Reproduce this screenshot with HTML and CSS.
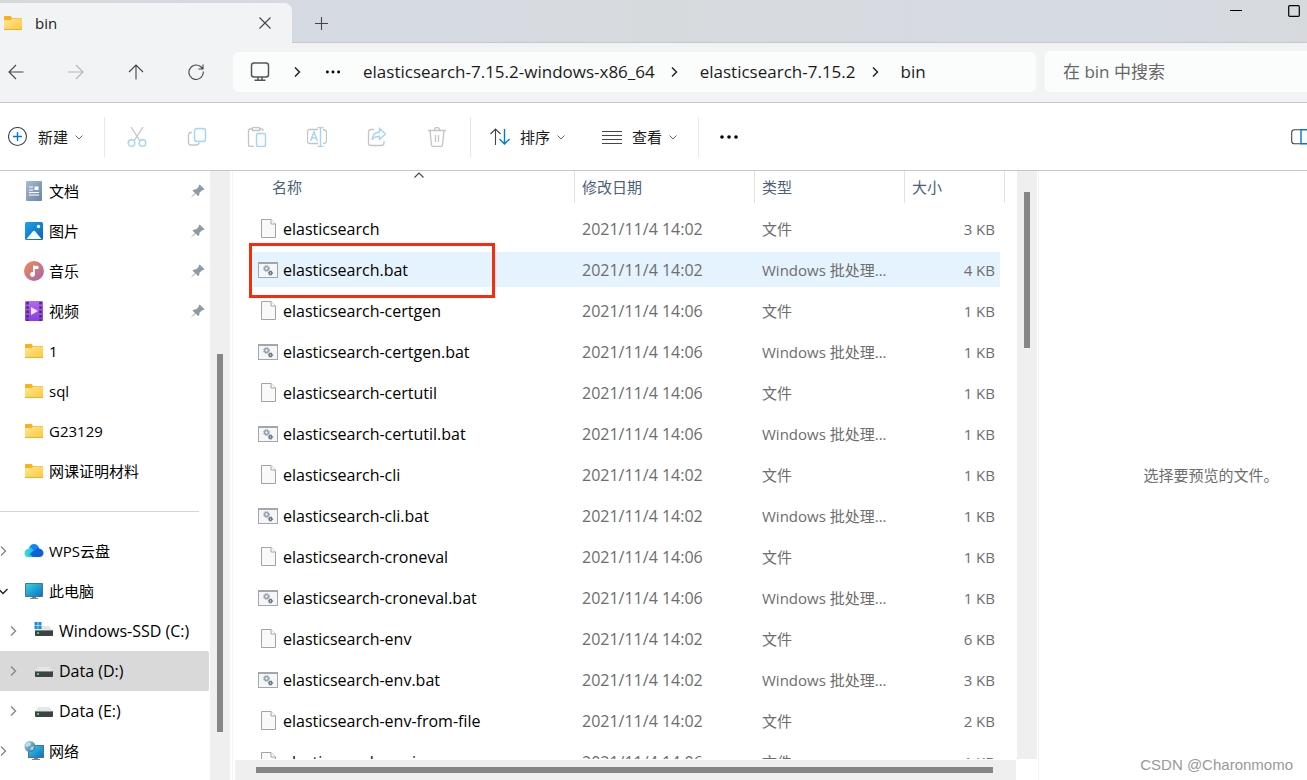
FILE: index.html
```html
<!DOCTYPE html>
<html lang="zh-CN">
<head>
<meta charset="utf-8">
<title>bin</title>
<link rel="stylesheet" href="styles.css">
</head>
<body>
<svg class="defs" aria-hidden="true">
  <defs>
    <linearGradient id="gFolder" x1="0" y1="0" x2="1" y2="1"><stop offset="0" stop-color="#ffe69c"/><stop offset="1" stop-color="#ffc938"/></linearGradient>
    <linearGradient id="gDoc" x1="0" y1="0" x2="1" y2="1"><stop offset="0" stop-color="#a9bdd0"/><stop offset="1" stop-color="#6785a5"/></linearGradient>
    <linearGradient id="gPic" x1="0" y1="0" x2="1" y2="1"><stop offset="0" stop-color="#1ba4e6"/><stop offset="1" stop-color="#0b62b8"/></linearGradient>
    <linearGradient id="gMusic" x1="0" y1="0" x2="1" y2="1"><stop offset="0" stop-color="#f58b4c"/><stop offset="1" stop-color="#a462b4"/></linearGradient>
    <linearGradient id="gVideo" x1="0" y1="0" x2="0" y2="1"><stop offset="0" stop-color="#b668ef"/><stop offset="1" stop-color="#8540df"/></linearGradient>
    <linearGradient id="gScreen" x1="0" y1="0" x2="1" y2="1"><stop offset="0" stop-color="#36d3e0"/><stop offset="1" stop-color="#0b71c6"/></linearGradient>
    <linearGradient id="gCloud" x1="0" y1="0" x2="1" y2="0"><stop offset="0" stop-color="#35e2cf"/><stop offset="1" stop-color="#18a5f5"/></linearGradient>
    <linearGradient id="gGlobe" x1="0" y1="0" x2="1" y2="1"><stop offset="0" stop-color="#a8d5ea"/><stop offset="1" stop-color="#286f9f"/></linearGradient>
  </defs>
  <symbol id="folder" viewBox="0 0 20 16"><path d="M1 2Q1 1 2 1H7.5L9 3V6H1Z" fill="#f9b215"/><path d="M1 5H7.5L9.5 3H18Q19 3 19 4V14Q19 15 18 15H2Q1 15 1 14Z" fill="url(#gFolder)"/><path d="M1 14.5H19" stroke="#eeb02c"/><path d="M9 3.5H19" stroke="#f5c553"/></symbol>
  <symbol id="doc" viewBox="0 0 20 20"><rect x="2" width="16" height="20" rx="1" fill="url(#gDoc)"/><path d="M5 6H9M5 9H9M5 11.500H15M5 14H15" stroke="#fff" stroke-width="1.2"/><rect x="10.500" y="5.500" width="4" height="3.500" fill="#fff"/></symbol>
  <symbol id="pic" viewBox="0 0 20 20"><rect x="1" y="1" width="18" height="18" rx="1.500" fill="url(#gPic)"/><path d="M2.500 18L8.500 10.700Q10 9 11.500 10.700L17.500 18Z" fill="#f2f9ff"/><circle cx="14.500" cy="5.500" r="1.700" fill="#fff"/></symbol>
  <symbol id="music" viewBox="0 0 20 20"><circle cx="10" cy="10" r="10" fill="url(#gMusic)"/><path d="M9 4.500L14.500 5V8H10.800V14H9Z" fill="#fff"/><circle cx="8.500" cy="13.500" r="2.400" fill="#fff"/></symbol>
  <symbol id="video" viewBox="0 0 20 20"><rect x="1" width="18" height="20" rx="1" fill="url(#gVideo)"/><path d="M3.500 1V20M16.500 1V20" stroke="#51247e" stroke-width="2.500" stroke-dasharray="2.500 1.800"/><path d="M7 6L14 10L7 14Z" fill="#efe6fb"/></symbol>
  <symbol id="pin" viewBox="0 0 14 14"><path d="M8.700.5L13.500 5.300L12.500 6.200L11.500 6.100L8.500 8.800Q8.700 11 7.300 12.300L4.500 9.500L1 13L.3 13.500L.6 12.700L3.900 9L1.500 6.500Q3 5.100 5.300 5.300L7.900 2.400L7.800 1.300Z" fill="#8f9ba3"/></symbol>
  <symbol id="cloud" viewBox="0 0 20 16"><path d="M4 14C1.500 14 .5 12 .5 10S2 6 4.500 6C5 3 7 1 10 1C12.500 1 15 3 15 5.500L14 14Z" fill="url(#gCloud)"/><path d="M9 14L5.500 11L10.500 7C12 4.500 14 4.500 15.500 5.500C18 6 19.500 8 19.500 10S18 14 15.500 14Z" fill="#0e5fdc"/><path d="M6 4C8 0 13 .5 14.800 5C13 4.800 11 6.500 10 8.500Q8.500 5 6 4Z" fill="#1384f4"/></symbol>
  <symbol id="screen" viewBox="0 0 20 18"><rect x="1" y="1" width="18" height="14" rx=".8" fill="#507286"/><rect x="2" y="2" width="16" height="12" fill="url(#gScreen)"/><path d="M8 15H12V16H14V17H6V16H8Z" fill="#74838d"/></symbol>
  <symbol id="drive" viewBox="0 0 20 18"><path d="M4 5H15L18.500 9H1.500Z" fill="#e4e6e8"/><rect x="1" y="9" width="18" height="6" rx=".7" fill="#3f4244"/><path d="M1.500 9.500H18.500" stroke="#85898c"/><rect x="3" y="11" width="2" height="2" fill="#36db54"/></symbol>
  <symbol id="windrive" viewBox="0 0 20 18"><path d="M5 4H15L18.500 8H1.500Z" fill="#e4e6e8"/><rect x="1" y="8" width="18" height="6" rx=".7" fill="#3f4244"/><path d="M1.500 8.500H18.500" stroke="#85898c"/><rect x="3" y="10" width="2" height="2" fill="#36db54"/><path d="M.5 0H3.700V3.200H.5ZM4.300 0H7.500V3.200H4.300ZM.5 3.800H3.700V7H.5ZM4.300 3.800H7.500V7H4.300Z" fill="#1990dc"/></symbol>
  <symbol id="network" viewBox="0 0 20 20"><rect x="4" y="4" width="16" height="13" fill="#507286"/><rect x="5" y="5" width="14" height="11" fill="url(#gScreen)"/><path d="M10 17H14V18H16V19H8V18H10Z" fill="#74838d"/><circle cx="6" cy="5.500" r="5.500" fill="url(#gGlobe)"/><path d="M3 2L6 1L7 4L4 6L1 5ZM7 6L10 5L9 9L6 9Z" fill="#d7edf4" opacity=".7"/></symbol>
  <symbol id="file" viewBox="0 0 20 20"><path d="M3.500.5H13L17.500 5V18.500H3.500Z" fill="#f9f9f9" stroke="#a3a3a3"/><path d="M13 .5V5H17.500" fill="#fff" stroke="#a3a3a3"/></symbol>
  <symbol id="bat" viewBox="0 0 20 16"><rect x=".5" y=".5" width="19" height="15" fill="#f5f6f7" stroke="#a3a7ab"/><path d="M1 1.500H19" stroke="#a3a7ab"/><g fill="none"><circle cx="8.500" cy="6.500" r="1.900" stroke="#93a3b0" stroke-width="1.500"/><circle cx="8.500" cy="6.500" r="3" stroke="#93a3b0" stroke-dasharray="1.200 1.200"/><circle cx="12.500" cy="11" r="1.400" stroke="#59646c" stroke-width="1.200"/><circle cx="12.500" cy="11" r="2.200" stroke="#59646c" stroke-width=".8" stroke-dasharray="1 1"/></g></symbol>
  <symbol id="right" viewBox="0 0 12 12"><path d="M4 1.500L8.500 6L4 10.500" fill="none" stroke="currentColor" stroke-width="1.400"/></symbol>
  <symbol id="down" viewBox="0 0 8 8"><path d="M.5 2.500L4 6L7.500 2.500" fill="none" stroke="currentColor"/></symbol>
  <symbol id="dots" viewBox="0 0 20 20"><circle cx="3" cy="10" r="1.800"/><circle cx="10" cy="10" r="1.800"/><circle cx="17" cy="10" r="1.800"/></symbol>
</svg>

<header class="tabs">
  <div class="tab">
    <svg class="i-folder"><use href="#folder"/></svg>
    <span class="tab-title">bin</span>
    <button class="tab-close" aria-label="关闭"><svg width="12" height="12"><path d="M.5.5L11.500 11.500M11.500.5L.5 11.500" class="ink"/></svg></button>
  </div>
  <button class="tab-new" aria-label="新标签页"><svg width="13" height="13"><path d="M6.500 0V13M0 6.500H13" class="ink"/></svg></button>
  <div class="window-buttons">
    <button aria-label="最小化"><svg width="12" height="12"><path d="M0 5.500H12" stroke="#000"/></svg></button>
    <button aria-label="最大化"><svg width="12" height="12"><rect x=".7" y=".7" width="10.600" height="10.600" rx="1" fill="none" stroke="#000" stroke-width="1.200"/></svg></button>
  </div>
</header>

<div class="navbar">
  <div class="history">
    <button aria-label="后退"><svg width="16" height="16"><path d="M15.500 8H1M8 1L1 8L8 15" class="ink"/></svg></button>
    <button aria-label="前进" disabled><svg width="16" height="16"><path d="M0 8H15M8 1L15 8L8 15" class="ink pale"/></svg></button>
    <button aria-label="向上"><svg width="16" height="16"><path d="M8 15.500V1M1 8L8 1L15 8" class="ink"/></svg></button>
    <button aria-label="刷新"><svg width="16" height="16"><path d="M15.300 7.500A7.200 7.200 0 1 1 12.500 2.500L15 5M15 .5V5H10.500" class="ink"/></svg></button>
  </div>
  <nav class="address" aria-label="地址">
    <svg width="22" height="22" class="monitor"><rect x="2.500" y="2" width="17" height="14" rx="2.500"/><path d="M9 16V19M13 16V19M5.500 19.300H16.500"/></svg>
    <svg class="chev"><use href="#right"/></svg>
    <svg class="i-more small"><use href="#dots"/></svg>
    <a href="#a">elasticsearch-7.15.2-windows-x86_64</a>
    <svg class="chev"><use href="#right"/></svg>
    <a href="#b">elasticsearch-7.15.2</a>
    <svg class="chev"><use href="#right"/></svg>
    <a href="#c">bin</a>
  </nav>
  <input class="search" type="search" placeholder="在 bin 中搜索" aria-label="搜索">
</div>

<div class="toolbar">
  <div class="group group-new">
    <button class="cmd"><svg width="20" height="20"><circle cx="9.500" cy="9.500" r="9" class="ink"/><path d="M9.500 5V14M5 9.500H14" class="blue"/></svg><span>新建</span><svg class="i-down"><use href="#down"/></svg></button>
  </div>
  <div class="group group-edit">
    <button aria-label="剪切" disabled><svg width="20" height="20"><path d="M4 0L13 14M16 0L7 14" class="gray"/><circle cx="4.500" cy="16" r="3.300" class="sky"/><circle cx="15.500" cy="16" r="3.300" class="sky"/></svg></button>
    <button aria-label="复制" disabled><svg width="20" height="20"><path d="M5 5.500H4Q1.500 5.500 1.500 8V15.500Q1.500 18 4 18H9Q12 18 12 15.500" class="gray"/><rect x="7.500" y="1.500" width="11" height="13" rx="2.500" class="sky"/></svg></button>
    <button aria-label="粘贴" disabled><svg width="20" height="20"><path d="M5.500 2H3Q1.500 2 1.500 3.500V18Q1.500 19.500 3 19.500H7M12.500 2H15Q16 2 16 4M5.500.5H12.500V3.500H5.500Z" class="gray"/><rect x="9.500" y="6.500" width="9" height="13" rx="1.500" class="sky"/></svg></button>
    <button aria-label="重命名" disabled><svg width="20" height="20"><path d="M11 2.500H3Q.5 2.500 .5 5V14Q.5 16.500 3 16.500H11M16 2.500Q19.500 2.500 19.500 6V13Q19.500 16.500 16 16.500" class="gray"/><path d="M3.500 14L7 5L10.500 14M5 11H9M13.500.5V19.500M10.500.5H16.500M10.500 19.500H16.500" class="sky"/></svg></button>
    <button aria-label="共享" disabled><svg width="20" height="20"><path d="M7 2.500H4Q1.500 2.500 1.500 5V16Q1.500 18.500 4 18.500H14Q17 18.500 17 16V14" class="gray"/><path d="M12.500 1.500L18.500 7L12.500 12.500V9.500Q7.500 9 5 13Q5.500 5.500 12.500 5Z" class="sky"/></svg></button>
    <button aria-label="删除" disabled><svg width="20" height="20"><path d="M1 3.500H19M3 3.500L4.500 18Q4.700 19.500 6 19.500H14Q15.300 19.500 15.500 18L17 3.500M7.500 3Q7.500 .5 10 .5T12.500 3M8.500 8V15M11.500 8V15" class="gray"/></svg></button>
  </div>
  <div class="group group-view">
    <button class="cmd"><svg width="20" height="20"><path d="M5.500 18V2M.5 7L5.500 2L10.500 7" class="ink"/><path d="M14.500 2V17M9.500 12L14.500 17L19.500 12" class="blue"/></svg><span>排序</span><svg class="i-down"><use href="#down"/></svg></button>
    <button class="cmd"><svg width="20" height="20"><path d="M0 4.500H20M0 8.500H20M0 12.500H20M0 16.500H20" class="ink"/></svg><span>查看</span><svg class="i-down"><use href="#down"/></svg></button>
  </div>
  <button class="more" aria-label="更多"><svg class="i-more"><use href="#dots"/></svg></button>
  <button class="preview-toggle" aria-label="预览窗格"><svg width="16" height="16"><path d="M10 .7H3.500Q.7.7.7 3.500V12Q.7 14.800 3.500 14.800H10" class="ink"/><path d="M16 .7H10V14.800H16" class="blue"/></svg></button>
</div>

<main class="main">
  <nav class="sidebar" aria-label="导航窗格">
    <ul class="tree">
      <li><a href="#d1"><svg class="ico"><use href="#doc"/></svg><span>文档</span><svg class="i-pin"><use href="#pin"/></svg></a></li>
      <li><a href="#d2"><svg class="ico"><use href="#pic"/></svg><span>图片</span><svg class="i-pin"><use href="#pin"/></svg></a></li>
      <li><a href="#d3"><svg class="ico"><use href="#music"/></svg><span>音乐</span><svg class="i-pin"><use href="#pin"/></svg></a></li>
      <li><a href="#d4"><svg class="ico"><use href="#video"/></svg><span>视频</span><svg class="i-pin"><use href="#pin"/></svg></a></li>
      <li><a href="#d5"><svg class="i-folder"><use href="#folder"/></svg><span>1</span></a></li>
      <li><a href="#d6"><svg class="i-folder"><use href="#folder"/></svg><span>sql</span></a></li>
      <li><a href="#d7"><svg class="i-folder"><use href="#folder"/></svg><span>G23129</span></a></li>
      <li><a href="#d8"><svg class="i-folder"><use href="#folder"/></svg><span>网课证明材料</span></a></li>
    </ul>
    <hr>
    <ul class="tree">
      <li><a class="branch" href="#e1"><svg class="twist"><use href="#right"/></svg><svg class="ico short"><use href="#cloud"/></svg><span>WPS云盘</span></a></li>
      <li><a class="branch" href="#e2"><svg class="twist open"><use href="#right"/></svg><svg class="ico"><use href="#screen"/></svg><span>此电脑</span></a></li>
      <li><a class="branch child" href="#e3"><svg class="twist"><use href="#right"/></svg><svg class="ico"><use href="#windrive"/></svg><span>Windows-SSD (C:)</span></a></li>
      <li><a class="branch child current" href="#e4"><svg class="twist"><use href="#right"/></svg><svg class="ico"><use href="#drive"/></svg><span>Data (D:)</span></a></li>
      <li><a class="branch child" href="#e5"><svg class="twist"><use href="#right"/></svg><svg class="ico"><use href="#drive"/></svg><span>Data (E:)</span></a></li>
      <li><a class="branch" href="#e6"><svg class="twist"><use href="#right"/></svg><svg class="ico"><use href="#network"/></svg><span>网络</span></a></li>
    </ul>
  </nav>
  <div class="vbar vbar-side"><div class="thumb"></div></div>

  <section class="files">
    <div class="files-body">
      <div class="list">
        <table>
          <colgroup><col class="c-name"><col class="c-date"><col class="c-type"><col class="c-size"></colgroup>
          <thead><tr>
            <th class="sorted"><span>名称</span><svg class="sort" width="10" height="6"><path d="M.5 5.500L5 1L9.500 5.500" class="ink"/></svg></th>
            <th><span>修改日期</span></th><th><span>类型</span></th><th><span>大小</span></th>
          </tr></thead>
          <tbody>
            <tr><td><svg class="ico"><use href="#file"/></svg>elasticsearch</td><td>2021/11/4 14:02</td><td>文件</td><td>3 KB</td></tr>
            <tr class="hover"><td><svg class="ico"><use href="#bat"/></svg>elasticsearch.bat<div class="mark"></div></td><td>2021/11/4 14:02</td><td>Windows 批处理...</td><td>4 KB</td></tr>
            <tr><td><svg class="ico"><use href="#file"/></svg>elasticsearch-certgen</td><td>2021/11/4 14:06</td><td>文件</td><td>1 KB</td></tr>
            <tr><td><svg class="ico"><use href="#bat"/></svg>elasticsearch-certgen.bat</td><td>2021/11/4 14:06</td><td>Windows 批处理...</td><td>1 KB</td></tr>
            <tr><td><svg class="ico"><use href="#file"/></svg>elasticsearch-certutil</td><td>2021/11/4 14:06</td><td>文件</td><td>1 KB</td></tr>
            <tr><td><svg class="ico"><use href="#bat"/></svg>elasticsearch-certutil.bat</td><td>2021/11/4 14:06</td><td>Windows 批处理...</td><td>1 KB</td></tr>
            <tr><td><svg class="ico"><use href="#file"/></svg>elasticsearch-cli</td><td>2021/11/4 14:02</td><td>文件</td><td>1 KB</td></tr>
            <tr><td><svg class="ico"><use href="#bat"/></svg>elasticsearch-cli.bat</td><td>2021/11/4 14:02</td><td>Windows 批处理...</td><td>1 KB</td></tr>
            <tr><td><svg class="ico"><use href="#file"/></svg>elasticsearch-croneval</td><td>2021/11/4 14:06</td><td>文件</td><td>1 KB</td></tr>
            <tr><td><svg class="ico"><use href="#bat"/></svg>elasticsearch-croneval.bat</td><td>2021/11/4 14:06</td><td>Windows 批处理...</td><td>1 KB</td></tr>
            <tr><td><svg class="ico"><use href="#file"/></svg>elasticsearch-env</td><td>2021/11/4 14:02</td><td>文件</td><td>6 KB</td></tr>
            <tr><td><svg class="ico"><use href="#bat"/></svg>elasticsearch-env.bat</td><td>2021/11/4 14:02</td><td>Windows 批处理...</td><td>3 KB</td></tr>
            <tr><td><svg class="ico"><use href="#file"/></svg>elasticsearch-env-from-file</td><td>2021/11/4 14:02</td><td>文件</td><td>2 KB</td></tr>
            <tr><td><svg class="ico"><use href="#file"/></svg>elasticsearch-geoip</td><td>2021/11/4 14:06</td><td>文件</td><td>1 KB</td></tr>
          </tbody>
        </table>
      </div>
      <div class="vbar vbar-list"><div class="thumb"></div></div>
    </div>
    <div class="hbar"><div class="thumb"></div></div>
  </section>

  <aside class="preview">选择要预览的文件。</aside>
</main>
<div class="watermark">CSDN @Charonmomo</div>
</body>
</html>
```
FILE: styles.css
```css
* { box-sizing: border-box; }

body {
  margin: 0;
  height: 100vh;
  display: flex;
  flex-direction: column;
  overflow: hidden;
  background: #fff;
  color: #000;
  font: 15px/20px "Open Sans", "Noto Sans CJK SC", sans-serif;
}

.defs { position: absolute; width: 0; height: 0; }
svg { flex: none; display: block; }
a { color: inherit; text-decoration: none; }
button {
  display: flex;
  align-items: center;
  justify-content: center;
  margin: 0;
  padding: 0;
  border: 0;
  background: none;
  color: #1b1b1b;
  font: inherit;
}

.ink { fill: none; stroke: #444; stroke-width: 1.1; }
.pale { stroke: #b5b6b8; }
.blue { fill: none; stroke: #0078d4; stroke-width: 1.4; }
.gray { fill: none; stroke: #c4c4c4; stroke-width: 1.3; }
.sky { fill: #fafdff; stroke: #a8d3f3; stroke-width: 1.4; }
.ico { width: 20px; height: 20px; }
.short { height: 16px; }
.i-folder { width: 20px; height: 16px; }
.i-down { width: 8px; height: 8px; color: #666; }
.i-more { width: 20px; height: 20px; }
.small { padding: 2px; }
.chev { width: 12px; height: 12px; }

/* Tab strip */
.tabs {
  flex: none;
  display: flex;
  height: 43px;
  background: linear-gradient(90deg, #d5d9dd, #d6dae3 30%, #d7dadd 50%, #d6dae3 85%, #d7dadd);
  border-bottom: 1px solid #c5c8cd;
}
.tab {
  display: flex;
  align-items: center;
  width: 292px;
  height: 40px;
  margin-top: 3px;
  padding: 0 21px 0 3px;
  border-radius: 0 8px 0 0;
  background: #f2f3f5;
}
.tab-title { flex: 1; margin-left: 12px; color: #1b1b1b; font-weight: 500; }
.tab-new { width: 58px; padding-top: 5px; }
.window-buttons { display: flex; gap: 46px; margin-left: auto; padding-right: 7px; }
.window-buttons button { height: 22px; }

/* Navigation row */
.navbar {
  flex: none;
  display: flex;
  align-items: center;
  height: 60px;
  padding-bottom: 2px;
  background: #f2f3f5;
  border-bottom: 1px solid #c5c8cd;
}
.history { display: flex; gap: 28px; margin-right: 21px; }
.history button { width: 32px; height: 32px; }
.address {
  flex: none;
  display: flex;
  align-items: center;
  gap: 20px;
  width: calc(100% - 504px);
  height: 40px;
  padding-left: 16px;
  border-radius: 5px;
  background: #fbfdfc;
  color: #1b1b1b;
  font-size: 17px;
}
.address a { margin-right: -7px; }
.monitor { fill: none; stroke: #555; stroke-width: 1.5; }
.search {
  flex: 1;
  min-width: 0;
  height: 41px;
  margin: 0 0 0 9px;
  padding: 0 18px;
  border: 0;
  border-radius: 5px 0 0 5px;
  background: #fbfdfc;
  font: inherit;
  font-size: 17px;
}
.search::placeholder { color: #666; opacity: 1; }

/* Command bar */
.toolbar {
  flex: none;
  display: flex;
  align-items: center;
  height: 68px;
  border-bottom: 1px solid #c5c5cb;
}
.group { display: flex; align-items: center; height: 40px; border-right: 1px solid #e8e8e8; }
.group-new { padding: 0 21px 0 8px; }
.group-edit { gap: 28px; padding: 0 17px 0 16px; }
.group-edit button { width: 32px; height: 32px; }
.group-view { gap: 37px; padding: 0 21px 0 19px; }
.cmd { gap: 7px; }
.cmd span { margin-left: 3px; }
.more { margin-left: 20px; }
.preview-toggle { margin-left: auto; }

/* Panes */
.main { flex: 1; min-height: 0; display: flex; }
.sidebar { flex: none; width: 210px; padding-right: 1px; overflow: hidden; }
.tree { margin: 0; padding: 0; list-style: none; }
.tree a {
  display: flex;
  align-items: center;
  height: 40px;
  padding: 0 4px 0 24px;
  border-radius: 0 2px 2px 0;
}
.tree span { margin-left: 5px; }
.i-pin { width: 14px; height: 14px; margin-left: auto; }
.tree .branch { padding-left: 0; }
.tree .child { padding-left: 10px; font-size: 16px; }
.twist { width: 12px; height: 12px; margin: 0 15px 0 -3px; color: #888; }
.open { transform: rotate(90deg); color: #222; }
.current { background: #d9d9d9; }
.sidebar hr {
  height: 1px;
  margin: 20px 10px 19px 0;
  border: 0;
  background: #d5d5d5;
}

.vbar { flex: none; width: 20px; background: #efefef; }
.vbar .thumb { width: 6px; margin-left: 7px; background: #868686; }
.vbar-side .thumb { height: 62%; margin-top: 183px; }
.vbar-list .thumb { height: 156px; margin-top: 21px; }
.files {
  flex: 1;
  min-width: 0;
  display: flex;
  flex-direction: column;
  margin-left: 2px;
  padding: 0 1px 0 2px;
  border: solid #f3f3f3;
  border-width: 0 1px;
}
.files-body { flex: 1; min-height: 0; display: flex; padding-bottom: 1px; }
.list { flex: 1; min-width: 0; padding-left: 18px; overflow: hidden; }
.hbar { flex: none; height: 20px; margin-right: 21px; padding: 7px 23px 7px 21px; background: #efefef; }
.hbar .thumb { height: 6px; background: #868686; }

table { width: 752px; table-layout: fixed; border-collapse: separate; border-spacing: 0; }
.c-name { width: 322px; }
.c-date { width: 180px; }
.c-type { width: 150px; }
.c-size { width: 100px; }
th { height: 37px; padding: 0; vertical-align: top; text-align: left; font-weight: 400; color: #4c607a; }
th span { display: block; height: 32px; padding: 6px 7px; border-right: 1px solid #e2e2e2; }
.sorted { position: relative; }
.sorted span { padding-left: 19px; }
.sort { position: absolute; top: 1px; left: 50%; }
td {
  height: 41px;
  padding: 0 7px;
  border: solid transparent;
  border-width: 3px 0;
  background-clip: padding-box;
  color: #6d6d6d;
  white-space: nowrap;
}
td:first-child { position: relative; padding-left: 5px; color: #000; font-size: 16px; }
td:nth-child(2) { font-size: 16px; }
td:last-child { padding-right: 5px; border-right-width: 5px; text-align: right; }
td .ico { display: inline-block; margin-right: 5px; vertical-align: top; }
.hover td { background-color: #e5f3fe; }
.mark {
  position: absolute;
  top: -9px;
  bottom: -11px;
  left: -4px;
  width: 246px;
  border: 3px solid #fb2a08;
}

.preview {
  flex: none;
  display: flex;
  align-items: center;
  justify-content: center;
  width: 268px;
  padding: 0 0 2px 76px;
  color: #6d6d6d;
  white-space: nowrap;
}
.watermark {
  position: absolute;
  right: 14px;
  bottom: 5px;
  color: #999;
  font-family: "Liberation Sans", sans-serif;
  font-size: 15px;
}
```
